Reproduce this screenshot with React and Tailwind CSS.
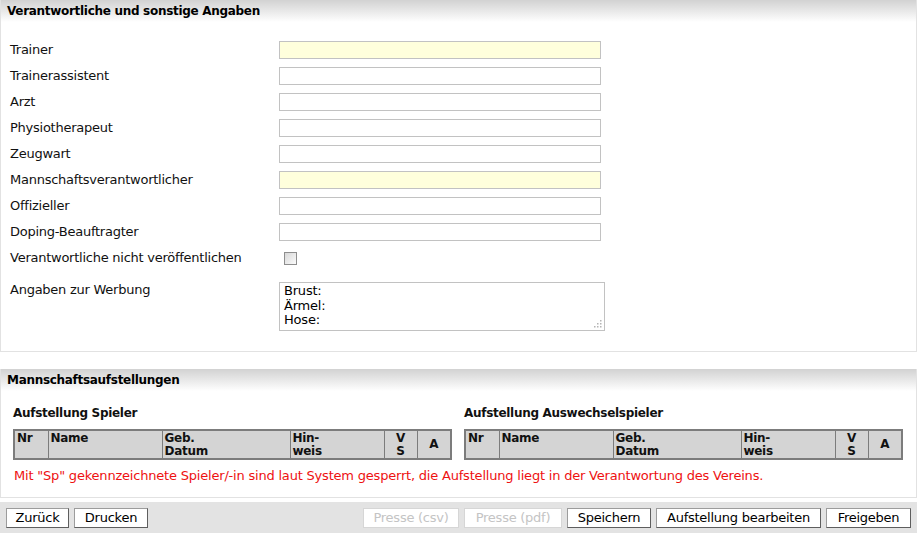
const fields = [
  { label: "Trainer", required: true },
  { label: "Trainerassistent" },
  { label: "Arzt" },
  { label: "Physiotherapeut" },
  { label: "Zeugwart" },
  { label: "Mannschaftsverantwortlicher", required: true },
  { label: "Offizieller" },
  { label: "Doping-Beauftragter" },
];

const SectionHeader = ({ children }) => (
  <div className="h-[22px] bg-gradient-to-b from-[#d2d2d2] to-white px-[6px] pt-[2px] text-[12px] font-bold tracking-[-0.3px] text-black">
    {children}
  </div>
);

const LineupTable = ({ title }) => (
  <div className="w-[438px]">
    <h3 className="mb-[8px] h-[16px] text-[12px] font-bold leading-[16px] tracking-[-0.3px]">
      {title}
    </h3>
    <table className="w-[437px] table-fixed border-collapse border-2 border-[#7c7c7c] bg-[#d4d4d4] text-[12px] font-bold leading-[13px] tracking-[-0.3px]">
      <thead>
        <tr className="h-[29px]">
          <th className="w-[34px] border border-[#7c7c7c] px-[2px] pt-[1px] text-left align-top">Nr</th>
          <th className="w-[114px] border border-[#7c7c7c] px-[2px] pt-[1px] text-left align-top">Name</th>
          <th className="w-[128px] border border-[#7c7c7c] px-[2px] pt-[1px] text-left align-top">
            Geb.
            <br />
            Datum
          </th>
          <th className="w-[94px] border border-[#7c7c7c] px-[2px] pt-[1px] text-left align-top">
            Hin-
            <br />
            weis
          </th>
          <th className="w-[33px] border border-[#7c7c7c] px-[2px] pt-[1px] text-center align-top">
            V
            <br />S
          </th>
          <th className="w-[34px] border border-[#7c7c7c] text-center align-middle">A</th>
        </tr>
      </thead>
    </table>
  </div>
);

const Button = ({ children, width, disabled }) => (
  <button
    disabled={disabled}
    className={
      disabled
        ? `${width} h-[20px] border border-[#d6d6d6] bg-white text-[13px] leading-[18px] tracking-[-0.25px] text-[#c4c4c4]`
        : `${width} h-[20px] border border-[#9c9c9c] border-r-[#5e5e5e] border-b-[#5e5e5e] bg-white text-[13px] leading-[18px] tracking-[-0.25px] text-black`
    }
  >
    {children}
  </button>
);

export default function App() {
  return (
    <div className="h-[533px] w-[917px] overflow-hidden bg-white font-['DejaVu_Sans',sans-serif] text-[13px] tracking-[-0.25px] text-[#111]">
      {/* Verantwortliche */}
      <section className="h-[352px] border-x border-b border-[#e2e2e2]">
        <SectionHeader>Verantwortliche und sonstige Angaben</SectionHeader>
        <div className="pt-[15px]">
          {fields.map((f) => (
            <div key={f.label} className="flex h-[26px] items-center">
              <label className="w-[278px] pl-[9px]">{f.label}</label>
              <div
                className={`h-[18px] w-[322px] border border-[#c2c2c2] ${
                  f.required ? "bg-[#ffffdc]" : "bg-white"
                }`}
              />
            </div>
          ))}
          <div className="flex h-[26px] items-center">
            <label className="w-[278px] pl-[9px]">Verantwortliche nicht veröffentlichen</label>
            <span className="ml-[5px] h-[13px] w-[13px] border border-[#8e8e8e] bg-gradient-to-br from-[#d8d8d8] to-[#fbfbfb]" />
          </div>
          <div className="mt-[11px] flex items-start">
            <label className="w-[278px] pl-[9px] leading-[16px]">Angaben zur Werbung</label>
            <div className="relative h-[49px] w-[326px] border border-[#c2c2c2] pl-[4px] pt-[1px] leading-[14.5px] tracking-[-0.2px] text-black">
              <div>Brust:</div>
              <div>Ärmel:</div>
              <div>Hose:</div>
              <svg className="absolute bottom-[2px] right-[2px]" width="9" height="9" viewBox="0 0 9 9">
                <g fill="#b4b4b4">
                  <rect x="7" y="1" width="1.5" height="1.5" />
                  <rect x="4" y="4" width="1.5" height="1.5" />
                  <rect x="7" y="4" width="1.5" height="1.5" />
                  <rect x="1" y="7" width="1.5" height="1.5" />
                  <rect x="4" y="7" width="1.5" height="1.5" />
                  <rect x="7" y="7" width="1.5" height="1.5" />
                </g>
              </svg>
            </div>
          </div>
        </div>
      </section>

      {/* Mannschaftsaufstellungen */}
      <section className="mt-[17px] h-[129px] border-x border-b border-[#e2e2e2]">
        <SectionHeader>Mannschaftsaufstellungen</SectionHeader>
        <div className="pl-[12px] pt-[14px]">
          <div className="flex gap-[13px]">
            <LineupTable title="Aufstellung Spieler" />
            <LineupTable title="Aufstellung Auswechselspieler" />
          </div>
          <p className="mt-[8px] pl-[1px] text-[13px] leading-[16px] tracking-[-0.2px] text-[#ee1111]">
            Mit "Sp" gekennzeichnete Spieler/-in sind laut System gesperrt, die Aufstellung liegt in der Verantwortung des Vereins.
          </p>
        </div>
      </section>

      {/* Buttons */}
      <div className="mt-[4px] flex h-[40px] items-start bg-[#e3e3e3] px-[6px] pt-[6px]">
        <div className="flex gap-[5px]">
          <Button width="w-[63px]">Zurück</Button>
          <Button width="w-[74px]">Drucken</Button>
        </div>
        <div className="ml-auto flex gap-[5px]">
          <Button width="w-[96px]" disabled>
            Presse (csv)
          </Button>
          <Button width="w-[98px]" disabled>
            Presse (pdf)
          </Button>
          <Button width="w-[84px]">Speichern</Button>
          <Button width="w-[165px]">Aufstellung bearbeiten</Button>
          <Button width="w-[85px]">Freigeben</Button>
        </div>
      </div>
    </div>
  );
}
